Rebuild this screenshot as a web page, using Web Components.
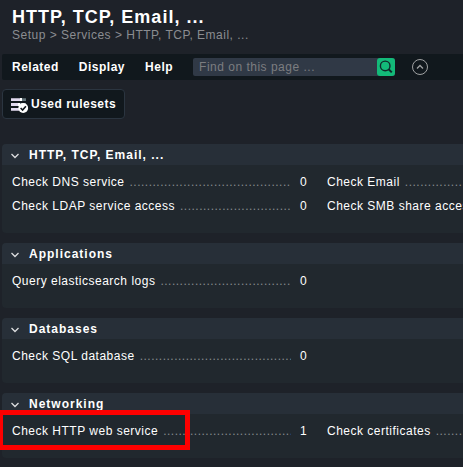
<!DOCTYPE html>
<html lang="en"><head><meta charset="utf-8"><title>HTTP, TCP, Email, ...</title>
<style>
html,body{margin:0;height:467px;overflow:hidden;background:#1e2229}
body{font:12px/14px "Liberation Sans",Arial,sans-serif;letter-spacing:.5px;color:#fff}
</style></head><body>
<setup-page></setup-page>
<script>
const define = (name, html) => {
  const t = document.createElement('template');
  t.innerHTML = html;
  customElements.define(name, class extends HTMLElement {
    constructor() {
      super();
      this.attachShadow({mode: 'open'}).append(t.content.cloneNode(true));
    }
  });
};

define('page-header', `<style>
:host{display:block;height:54px;box-sizing:border-box;padding:6px 0 0 12px}
h1{margin:0;font-size:18px;line-height:22px;letter-spacing:1px;font-weight:bold}
div{color:#8b8d91;line-height:14px}
</style><h1><slot name="title"></slot></h1><div><slot></slot></div>`);

define('search-field', `<style>
:host{display:flex;width:202px;height:18px;background:#303946;border-radius:2px;color:#7c7d80}
span{flex:1;padding-left:6px;line-height:18px}
svg{display:block}
</style><span><slot></slot></span>
<svg width="18" height="18" viewBox="0 0 18 18"><rect width="18" height="18" rx="3" fill="#13ba79"/><g fill="none" stroke="#10292a" stroke-width="1.4"><circle cx="8.2" cy="7.9" r="4.8"/><path d="M11.6 11.2l3.2 3.2" stroke-width="2"/></g></svg>`);

define('menu-bar', `<style>
:host{display:flex;align-items:center;height:26px;margin-left:2px;padding-left:10px;background:#11181d;border-radius:2px 0 0 2px;font-weight:bold}
span{margin-right:20px}
search-field{font-weight:normal}
svg{margin-left:17px}
</style><span>Related</span><span>Display</span><span>Help</span><search-field>Find on this page ...</search-field>
<svg width="16" height="16" viewBox="0 0 16 16" fill="none" stroke="#a0a2a3"><circle cx="8" cy="8" r="7.5"/><path d="M5 9.5l3-3 3 3" stroke-width="1.3"/></svg>`);

define('action-button', `<style>
:host{display:flex;align-items:center;box-sizing:border-box;width:123px;height:30px;margin:9px 0 25px 2px;padding-left:8px;border:1px solid #2b3540;border-radius:4px;background:#11181d;font-weight:bold}
svg{margin-right:2px}
</style><svg width="18" height="18" viewBox="0 0 18 18"><g fill="#e2daef"><path d="M0 3.2h9v2.8H0zM0 8.1h7v2.8H0zM0 13h8v2.8H0z"/><path d="M9 3h2v3H9zM7 8h2v3H7z" fill="#fff"/><path d="M11 3.2h4V6h-4zM9 8.1h6v2.8H9z" fill="#65757b"/></g><circle cx="12.2" cy="13" r="4.9" fill="#fff"/><path d="M9.6 13l2 2 3.3-3.8" fill="none" stroke="#11181d" stroke-width="1.6"/></svg><slot></slot>`);

define('rule-group', `<style>
:host{display:block;margin:0 0 10px 2px;background:#21282e;border-radius:4px 0 0 4px;overflow:hidden}
header{display:flex;align-items:center;height:21px;padding-left:9px;background:#272f38;font-weight:bold;letter-spacing:1px}
svg{margin:3px 10px 0 0}
div{display:grid;grid-template-columns:295px 295px;column-gap:20px;grid-auto-rows:24px;padding:5px 0 15px 10px}
</style><header><svg width="8" height="6" viewBox="0 0 8 6" fill="none" stroke="#dcdddf" stroke-width="1.3"><path d="M.5 1L4 4.5 7.5 1"/></svg><slot name="title"></slot></header><div><slot></slot></div>`);

define('rule-link', `<style>
:host{display:flex;line-height:24px;white-space:nowrap;min-width:0}
.name{flex:1;min-width:0;overflow:hidden}
i{font-style:normal;color:#888c8e;margin-left:5px}
.n{width:16px;box-sizing:border-box;padding-left:9px}
</style><span class="name"><slot></slot><i></i></span><span class="n"><slot name="count"></slot></span>`);

define('highlight-frame', `<style>
:host{position:absolute;left:-2px;top:410px;width:191.5px;height:39.5px;box-sizing:border-box;border:5px solid #fe0000}
</style>`);

define('setup-page', `<style>
:host{display:block;position:relative;width:463px;height:467px;overflow:hidden}
</style>
<page-header><span slot="title">HTTP, TCP, Email, ...</span>Setup &gt; Services &gt; HTTP, TCP, Email, ...</page-header>
<menu-bar></menu-bar>
<action-button>Used rulesets</action-button>
<rule-group><span slot="title">HTTP, TCP, Email, ...</span>
<rule-link>Check DNS service<span slot="count">0</span></rule-link><rule-link>Check Email</rule-link>
<rule-link>Check LDAP service access<span slot="count">0</span></rule-link><rule-link>Check SMB share access</rule-link></rule-group>
<rule-group><span slot="title">Applications</span><rule-link>Query elasticsearch logs<span slot="count">0</span></rule-link></rule-group>
<rule-group><span slot="title">Databases</span><rule-link>Check SQL database<span slot="count">0</span></rule-link></rule-group>
<rule-group><span slot="title">Networking</span><rule-link>Check HTTP web service<span slot="count">1</span></rule-link><rule-link>Check certificates</rule-link></rule-group>
<highlight-frame></highlight-frame>`);

// Fill each name cell with leader dots up to its right edge; the cell clips the last one.
for (const link of document.querySelector('setup-page').shadowRoot.querySelectorAll('rule-link')) {
  const dots = link.shadowRoot.querySelector('i');
  dots.textContent = '.'.repeat(10);
  const box = dots.getBoundingClientRect();
  const end = Math.min(link.shadowRoot.querySelector('.name').getBoundingClientRect().right, 463);
  dots.textContent = '.'.repeat(Math.max(0, Math.ceil((end - box.left) / (box.width / 10) - 0.2)));
}
</script></body></html>
